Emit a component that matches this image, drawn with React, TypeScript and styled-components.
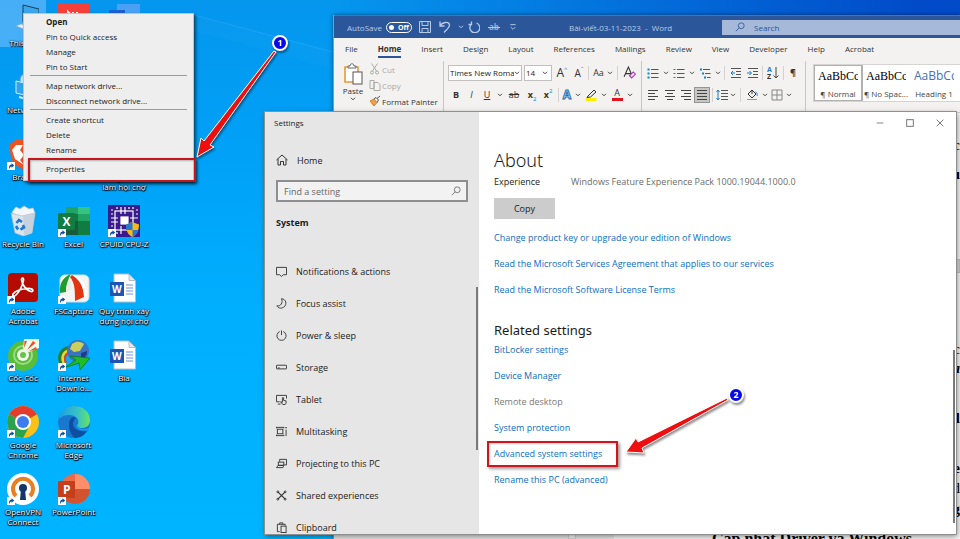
import React from "react";
import styled, { createGlobalStyle, css } from "styled-components";

const GlobalStyle = createGlobalStyle`
  *, *::before, *::after { box-sizing: border-box; }
  html, body, #root { height: 100%; }
  body { margin: 0; overflow: hidden; font-family: "Open Sans", "Noto Sans", sans-serif; font-size: 9px; color: #1b1b1b; }
  button, input, select { font: inherit; color: inherit; margin: 0; padding: 0; border: 0; background: none; }
  h1, h2, h3, p, ul { margin: 0; padding: 0; list-style: none; font-weight: 400; }
  a { text-decoration: none; color: inherit; }
  svg { display: block; flex: none; }
`;

const Desktop = styled.main`
  position: relative;
  height: 100vh;
  overflow: hidden;
  background:
    linear-gradient(to right, rgba(0, 70, 200, 0) 35%, rgba(0, 66, 196, 0.9) 96%),
    linear-gradient(to bottom, #0596ee 0%, #00a2f8 30%, #00b0ff 60%, #00b4ff 100%);
`;

const Streaks = styled.svg`
  position: absolute;
  inset: 0;
  width: 100%;
  height: 100%;
`;

/* ---------- Desktop shortcuts ---------- */

const ShortcutGrid = styled.div`
  position: relative;
  display: grid;
  width: max-content;
  grid-template-columns: 46px 55px 46px;
  grid-auto-rows: 67px;
  padding-top: 4px;
`;

const Shortcut = styled.button<{ $col: number; $row: number; $selected?: boolean }>`
  grid-column: ${(p) => p.$col};
  grid-row: ${(p) => p.$row};
  display: flex;
  flex-direction: column;
  align-items: center;
  align-self: start;
  gap: 2px;
  height: 56px;
  ${(p) => p.$selected && css`height: 43px; background: rgba(150, 205, 255, 0.45); box-shadow: 0 -4px 0 rgba(150, 205, 255, 0.45);`}
`;

const ShortcutLabel = styled.span`
  width: max-content;
  text-align: center;
  white-space: pre-line;
  font-size: 8px;
  line-height: 10px;
  color: #fff;
  text-shadow: 0 1px 1px #000, 1px 1px 1px #012, 0 0 2px #013, 0 0 1px #013;
`;

const ShortcutMark = () => (
  <g>
    <rect x="0" y="24" width="8" height="8" fill="#fff" />
    <path d="M2 30.5 C2 27.5 3.3 26.6 4.6 26.6 L4.6 25.2 L7.2 27.5 L4.6 29.8 L4.6 28.5 C3.5 28.6 3 29.2 2.8 30.5 Z" fill="#0b4fa8" />
  </g>
);

const Glyph = styled.text`
  font-family: "Open Sans", sans-serif;
  font-weight: 700;
`;

const wordDoc = (
  <>
    <path d="M6 2 H21 L27.500 8.500 V30 H6 Z" fill="#fff" stroke="#b5bdc8" />
    <path d="M21 2 V8.500 H27.500 Z" fill="#e3e7ec" stroke="#9da6b2" strokeWidth=".7" />
    <path d="M18 13 H25 M18 16 H25 M18 19 H25 M18 22 H25" stroke="#6794d6" strokeWidth="1" />
    <rect x="2" y="10" width="14" height="14" fill="#1d55b4" />
    <Glyph x="4" y="21" fontSize="10" fill="#fff">W</Glyph>
  </>
);

const art: Record<string, React.ReactNode> = {
  pc: (
    <>
      <path d="M16 1 L32 5 V23 L16 18 Z" fill="#3aa7ec" stroke="#24394f" />
      <path d="M9 22 L14 20 L31 26 L27 29 Z" fill="#e6eff7" stroke="#90a4b5" strokeWidth=".6" />
    </>
  ),
  net: (
    <>
      <circle cx="20" cy="9" r="7" fill="#bfe4fb" stroke="#4fa4da" />
      <path d="M9 10 L26 14 V26 L9 22 Z" fill="#2fa4f2" stroke="#d8ecf9" />
      <path d="M12 26 L27 30" stroke="#dbe8f2" strokeWidth="2" />
    </>
  ),
  brave: (
    <>
      <path d="M10 1 H24 L29 7 L27 20 C26 25 20 29 16 32 C11 28 5 25 4 19 L2 7 Z" fill="#f1531f" />
      <path d="M9 7 H16 L13 12 L17 17 L13 22 L17 27 L8 21 L5 12 Z" fill="#fff" />
    </>
  ),
  red: (
    <>
      <rect width="32" height="32" fill="#f5403a" />
      <path d="M10 15 V8 L15 13 V8 M19 13 V8" stroke="#fff" strokeWidth="2" fill="none" />
    </>
  ),
  blue: (
    <>
      <rect x="9" y="0" width="23" height="30" fill="#4aa0f5" />
      <rect x="1" y="6" width="16" height="16" fill="#1c5fd0" />
    </>
  ),
  bin: (
    <>
      <path d="M5 7 L9 2 L13 4 L17 1 L22 4 L26 3 L28 8 L25 12 H8 Z" fill="#f3f6fa" stroke="#bfcad6" strokeWidth=".7" />
      <path d="M4 8 L15 11 L28 8 L25 28 L16 31 L8 28 Z" fill="#dce4ec" stroke="#a9b8c6" strokeWidth=".7" />
      <path d="M16 11 L17 31 L25 28 L28 8 Z" fill="#c7d2dd" />
      <g stroke="#1f77cf" strokeWidth="2.600" fill="none">
        <path d="M9.500 18 L12 15 L15 17" />
        <path d="M9 21 L11 24.500" />
        <path d="M13.500 24.500 L17 22.500 L16 20" />
      </g>
    </>
  ),
  excel: (
    <>
      <rect x="8" y="2" width="12" height="14" fill="#21a366" />
      <rect x="20" y="2" width="12" height="7" fill="#33c481" />
      <rect x="20" y="9" width="12" height="7" fill="#21a366" />
      <rect x="8" y="16" width="12" height="14" fill="#185c37" />
      <rect x="20" y="16" width="12" height="14" fill="#107c41" />
      <rect x="8" y="9" width="12" height="7" fill="#107c41" />
      <rect x="0" y="8" width="17" height="17" rx="1" fill="#107c41" />
      <Glyph x="4.500" y="20.500" fontSize="12" fill="#fff">X</Glyph>
    </>
  ),
  cpuz: (
    <>
      <rect width="32" height="32" fill="#3a1a8c" />
      <g stroke="#fff" strokeWidth="1.200" fill="none">
        <rect x="7" y="6" width="18" height="19" />
        <rect x="13" y="12" width="7" height="7" fill="#fff" />
        <path d="M3 5 H5 M3 9 H5 M3 13 H10 M3 17 H10 M3 21 H5 M9 2 V4 M13 2 V9 M17 2 V9 M21 2 V4 M25 2 V4 M28 9 H30 M22 13 H30 M28 5 H30 M13 21 V29 M9 27 V29" />
      </g>
      <path d="M24 17 L31 19.500 C31 26 28 30 24.500 32 C20 30 18 26 18 19.500 Z" fill="#f7b916" />
      <path d="M24.500 17 L18 19.500 V25 H24.500 Z M24.500 25 H30.500 C29.500 28 27 31 24.500 32 Z" fill="#2878d2" />
    </>
  ),
  acrobat: (
    <>
      <rect x="1" y="1" width="30" height="29" rx="4" fill="#b30b00" />
      <path d="M6 22 C9 18 14 17 20 16.500 C27 16 27 20 24 19.500 C19 18.500 15 12 14.500 8 C14.500 5.500 17 5.500 16.500 8.500 C16 13 12 20 9 23 C7 25 5 24 6 22 Z" fill="none" stroke="#fff" strokeWidth="1.700" />
    </>
  ),
  fs: (
    <>
      <rect x="2" y="3" width="29" height="27" rx="5" fill="#f4f4f2" stroke="#d4dde2" />
      <path d="M13 2 C5 5 1 12 2 21 L8 20 C8 13 11 8 13 2 Z" fill="#1f9b2f" />
      <path d="M13 2 C9 9 8 15 8 20 L13 18 C13 12 14 8 13 2 Z" fill="#e9efe6" />
      <path d="M14 3 C21 6 26 14 26 25 L17 29 C17 19 17 11 12 5 Z" fill="#e2350f" />
      <path d="M14 3 C23 4 29 13 29 23 L26 25 C26 15 21 7 14 3 Z" fill="#fff" />
    </>
  ),
  word: wordDoc,
  coccoc: (
    <>
      <circle cx="16" cy="17" r="15" fill="#58bd3b" />
      <circle cx="16" cy="16" r="9" fill="none" stroke="#9bdc84" strokeWidth="2" />
      <circle cx="16" cy="16" r="6" fill="#f3fbef" />
      <circle cx="16" cy="16" r="3" fill="#69c44b" />
      <path d="M16 11 L17 0 H32 V9 L22 13 Z" fill="#eefae8" />
      <path d="M17 9 L17.500 2 H20 Z M20 11 L26 2 L28.500 4 Z M22 12 L29 8 L30 10.500 Z" fill="#ef4b2b" />
    </>
  ),
  idm: (
    <>
      <path d="M4 27 C-2 16 4 8 15 8" fill="none" stroke="#2c7d1f" strokeWidth="3" />
      <path d="M6 25 C2 16 7 11 15 11" fill="none" stroke="#f2d51d" strokeWidth="2.500" />
      <path d="M8 24 C5 17 9 13 15 13" fill="none" stroke="#e3401d" strokeWidth="2" />
      <circle cx="20" cy="12" r="11" fill="#3a72c4" />
      <path d="M14 5 C19 1 24 3 26 5 L22 12 L16 13 L12 10 Z" fill="#c9cf5c" />
      <path d="M23 14 L29 12 C29 17 26 20 23 21 Z" fill="#1a3e8a" />
      <path d="M12 17 L32 19 L22 31 L21 24 L6 29 L18 21 Z" fill="#20bb28" stroke="#0c7a18" strokeWidth=".8" />
    </>
  ),
  chrome: (
    <>
      <circle cx="16" cy="16" r="16" fill="#fbc116" />
      <path d="M16 16 L2.200 8 A16 16 0 0 1 29.800 8 Z" fill="#e33b2e" />
      <path d="M16 16 L2.200 8 A16 16 0 0 0 16 32 L22.500 20 Z" fill="#2ba24c" />
      <path d="M16 8 H29.800 L20 14 Z" fill="#e33b2e" />
      <circle cx="16" cy="16" r="8" fill="#fff" />
      <circle cx="16" cy="16" r="6" fill="#3b7ded" />
    </>
  ),
  edge: (
    <>
      <defs>
        <linearGradient id="edgeTop" x1="0" x2="1">
          <stop offset="0" stopColor="#1b9de2" />
          <stop offset=".6" stopColor="#35c1c9" />
          <stop offset="1" stopColor="#6be35f" />
        </linearGradient>
      </defs>
      <circle cx="16" cy="16" r="16" fill="#1878cf" />
      <path d="M0 15 C1 5 8 0 16 0 C25 0 32 6 32 14 C32 20 28 22 24 22 C20 22 18.500 20 20 18 C22 12 16 9 11 9 C5 9 1 12 0 15 Z" fill="url(#edgeTop)" />
      <path d="M11 19 C11 12 15 10 18 12 C11 18 17 27 29 25 C26 30 21 32 17 32 C13 29 11 24 11 19 Z" fill="#0d4f9e" />
      <path d="M19 18 C17 21 20 25 29 24.500 L31 22 C26 24 19 23 19 18 Z" fill="#06a4f5" />
    </>
  ),
  vpn: (
    <>
      <circle cx="16" cy="16" r="16" fill="#fff" />
      <path d="M9 23 A10 10 0 1 1 23 23" fill="none" stroke="#e87f22" strokeWidth="4" />
      <circle cx="16" cy="15" r="4" fill="#153668" />
      <path d="M14 16 H18 L19 27 H13 Z" fill="#153668" />
    </>
  ),
  ppt: (
    <>
      <circle cx="17" cy="16" r="15" fill="#ed6c47" />
      <path d="M17 1 A15 15 0 0 1 32 16 H17 Z" fill="#ff8f6b" />
      <path d="M2 16 H32 A15 15 0 0 1 2 16 Z" fill="#d35230" />
      <rect x="0" y="8" width="17" height="17" rx="1" fill="#c43e1c" />
      <Glyph x="5" y="20.500" fontSize="12" fill="#fff">P</Glyph>
    </>
  ),
};

type ShortcutData = { id: string; col: number; row: number; label: string; link?: boolean };
const shortcuts: ShortcutData[] = [
  { id: "pc", col: 1, row: 1, label: "This PC" },
  { id: "red", col: 2, row: 1, label: "" },
  { id: "blue", col: 3, row: 1, label: "" },
  { id: "net", col: 1, row: 2, label: "Network" },
  { id: "brave", col: 1, row: 3, label: "Brave", link: true },
  { id: "word", col: 3, row: 3, label: "Quy trình\nlàm hội chợ" },
  { id: "bin", col: 1, row: 4, label: "Recycle Bin" },
  { id: "excel", col: 2, row: 4, label: "Excel", link: true },
  { id: "cpuz", col: 3, row: 4, label: "CPUID CPU-Z", link: true },
  { id: "acrobat", col: 1, row: 5, label: "Adobe\nAcrobat", link: true },
  { id: "fs", col: 2, row: 5, label: "FSCapture", link: true },
  { id: "word", col: 3, row: 5, label: "Quy trình xây\ndựng hội chợ" },
  { id: "coccoc", col: 1, row: 6, label: "Cốc Cốc", link: true },
  { id: "idm", col: 2, row: 6, label: "Internet\nDownlo...", link: true },
  { id: "word", col: 3, row: 6, label: "Bìa" },
  { id: "chrome", col: 1, row: 7, label: "Google\nChrome", link: true },
  { id: "edge", col: 2, row: 7, label: "Microsoft\nEdge", link: true },
  { id: "vpn", col: 1, row: 8, label: "OpenVPN\nConnect", link: true },
  { id: "ppt", col: 2, row: 8, label: "PowerPoint", link: true },
];

/* ---------- Context menu ---------- */

const Menu = styled.div`
  position: absolute;
  left: 23px;
  top: 13px;
  width: 171px;
  padding: 0 0 3px;
  background: #eee;
  border: 1px solid #c3c3c3;
  box-shadow: 2px 2px 3px rgba(0, 0, 0, 0.55);
`;

const MenuItem = styled.button<{ $strong?: boolean }>`
  display: block;
  width: 100%;
  padding-left: 22px;
  text-align: left;
  font-size: 8px;
  line-height: 15px;
  font-weight: ${(p) => (p.$strong ? 700 : 400)};
`;

const MenuRule = styled.hr`
  margin: 1px 6px 2px;
  border: 0;
  border-top: 1px solid #9b9b9b;
`;

const MarkedItem = styled.div`
  margin: 1px -3px -5px 4px;
  padding: 1px 0 4px;
  border: 2px solid #c4161c;
  box-shadow: 1px 2px 3px rgba(0, 0, 0, 0.6), inset 1px 1px 2px rgba(0, 0, 0, 0.25);

  ${MenuItem} { padding-left: 16px; }
`;

/* ---------- Word ---------- */

const WordWindow = styled.section`
  position: absolute;
  left: 333px;
  right: 0;
  top: 15px;
  bottom: 0;
  overflow: hidden;
  display: flex;
  flex-direction: column;
  background: #e6e6e6;
  border-left: 1px solid #8c98a8;
  box-shadow: 0 0 4px rgba(0, 0, 0, 0.5);
`;

const WordTitle = styled.header`
  display: flex;
  align-items: center;
  height: 23px;
  flex: none;
  padding-left: 13px;
  background: #2b579a;
  border-top: 1px solid #56728f;
  color: #b9cbe6;
  font-size: 8px;
  white-space: nowrap;
`;

const AutoSave = styled.label`
  display: flex;
  align-items: center;
  gap: 4px;
  width: 65px;
`;

const Switch = styled.span`
  display: flex;
  align-items: center;
  gap: 4px;
  width: 26px;
  height: 11px;
  padding-left: 2px;
  border: 1px solid #fff;
  border-radius: 6px;
  color: #fff;
  font-size: 7px;
  font-weight: 700;
`;

const SwitchInput = styled.input`
  appearance: none;
  width: 5px;
  height: 5px;
  border-radius: 50%;
  background: #fff;
`;

const QuickAccess = styled.div`
  display: flex;
  align-items: center;
  width: 157px;
  padding-left: 6px;
`;

const WordName = styled.h2`
  width: 153px;
  font-size: 8px;
`;

const WordSearch = styled.label`
  flex: 1;
  display: flex;
  align-items: center;
  gap: 9px;
  height: 15px;
  padding-left: 13px;
  background: #a6b9d8;
  color: #2b579a;

  input { width: 100px; outline: 0; }
  input::placeholder { color: #2b579a; opacity: 1; }
`;

const Tabs = styled.nav`
  display: flex;
  flex: none;
  height: 23px;
  padding: 2px 0 0 11px;
  gap: 20px;
  background: #f3f2f1;
`;

const Tab = styled.button<{ $on?: boolean }>`
  height: 18px;
  font-size: 8px;
  color: #333;
  font-weight: ${(p) => (p.$on ? 700 : 400)};
  border-bottom: 2px solid ${(p) => (p.$on ? "#2b579a" : "transparent")};
`;

const Ribbon = styled.div`
  display: flex;
  flex: none;
  height: 52px;
  background: #f3f2f1;
  border-bottom: 1px solid #d0cecc;
`;

const Group = styled.div<{ $w: number; $pad?: number }>`
  display: flex;
  flex-direction: column;
  flex: none;
  width: ${(p) => p.$w}px;
  padding-left: ${(p) => p.$pad ?? 4}px;
  gap: 4px;
  border-right: 1px solid #c8c6c4;
`;

const ClipboardGroup = styled.div`
  display: flex;
  flex: none;
  width: 110px;
  padding: 0 0 0 8px;
  gap: 5px;
  border-right: 1px solid #c8c6c4;
`;

const PasteButton = styled.button`
  display: flex;
  flex-direction: column;
  align-items: center;
  align-self: start;
  width: 22px;
  padding-top: 2px;
  font-size: 8px;
  line-height: 12px;
  color: #333;
`;

const ClipList = styled.div`
  display: flex;
  flex-direction: column;
`;

const ClipButton = styled.button`
  display: flex;
  align-items: center;
  gap: 1px;
  height: 16px;
  font-size: 8px;
  color: #333;
  white-space: nowrap;
  &:disabled { color: #a8a6a4; }
`;

const ToolRow = styled.div`
  display: flex;
  align-items: center;
  height: 19px;
  &:first-child { margin-top: 3px; height: 17px; }
`;

const Tool = styled.button<{ $w: number; $on?: boolean }>`
  display: flex;
  align-items: center;
  justify-content: center;
  flex: none;
  width: ${(p) => p.$w}px;
  height: 16px;
  gap: 3px;
  font-size: 9px;
  color: #333;
  ${(p) => p.$on && css`background: #c8c6c4; outline: 1px solid #979593; outline-offset: -1px;`}
`;

const Split = styled.i<{ $w: number }>`
  flex: none;
  width: ${(p) => p.$w}px;
  height: 14px;
  background: linear-gradient(#d4d2d0, #d4d2d0) center / 1px 100% no-repeat;
`;

const Picker = styled.label<{ $w: number }>`
  display: flex;
  align-items: center;
  flex: none;
  width: ${(p) => p.$w}px;
  height: 16px;
  margin-right: 2px;
  padding: 0 1px 0 1px;
  background: #fff;
  border: 1px solid #c2c0be;
  font-size: 8px;

  &:last-of-type { margin-right: 0; padding-right: 3px; }
  select { appearance: none; flex: 1; min-width: 0; outline: 0; }
`;

const Styles = styled.div`
  display: flex;
  flex: 1;
  min-width: 0;
  overflow: hidden;
  align-self: flex-start;
  height: 38px;
  margin: 3px 0 0 7px;
  background: #fff;
  border: 1px solid #d6d4d2;
  border-right: 0;
`;

const StyleCard = styled.button<{ $on?: boolean }>`
  display: flex;
  flex-direction: column;
  align-items: center;
  justify-content: space-between;
  flex: none;
  width: 48px;
  height: 36px;
  padding: 3px 3px 2px;
  font-size: 8px;
  line-height: 11px;
  color: #444;
  white-space: nowrap;
  ${(p) => p.$on && css`outline: 2px solid #b3b1af; outline-offset: -1px;`}
`;

const Sample = styled.span<{ $heading?: boolean }>`
  width: 40px;
  overflow: hidden;
  text-align: left;
  font: ${(p) => (p.$heading ? '12px/16px "Open Sans", sans-serif' : '12px/16px "Liberation Serif", serif')};
  color: ${(p) => (p.$heading ? "#4472a8" : "#000")};
`;

const Document = styled.div`
  flex: 1;
  display: flex;
  min-height: 0;
  background: #e6e6e6;
`;

const VerticalRuler = styled.div`
  width: 8px;
  margin-left: 234px;
  background: #fafafa;
  border: 1px solid #cfcfcf;
`;

const Page = styled.article`
  flex: 1;
  display: flex;
  flex-direction: column;
  justify-content: space-between;
  margin-left: 38px;
  overflow: hidden;
  background: #f6f6f6;
  font-family: "Liberation Serif", serif;
  font-size: 15px;
  color: #000;
`;

const PageEdge = styled.div`
  display: grid;
  grid-template-rows: 30px 29px 89px 86px 19px 50px 50px 20px 21px;
  align-items: end;
  justify-items: end;
  padding-top: 12px;
  line-height: 20px;
  b, i { display: block; }
  i { font-weight: 700; }
`;

const PageBreak = styled.span`
  width: 100%;
  height: 14px;
  background: #d9d9d9;
  border: 1px solid #c3c3c3;
`;

const PageHeading = styled.h3`
  padding-left: 98px;
  margin-bottom: -9px;
  font-size: 16px;
  line-height: 18px;
  font-weight: 700;
  white-space: nowrap;
`;

/* ---------- Settings ---------- */

const SettingsWindow = styled.section`
  position: absolute;
  left: 265px;
  right: 4px;
  top: 112px;
  bottom: 5px;
  display: flex;
  overflow: hidden;
  background: #fff;
  outline: 1px solid #8f8f8f;
  box-shadow: 1px 2px 6px rgba(0, 0, 0, 0.5);
`;

const Side = styled.aside`
  display: flex;
  flex-direction: column;
  flex: none;
  width: 214px;
  padding: 3px 0 0 11px;
  background: #e6e6e6;
`;

const SideTitle = styled.h2`
  margin-left: -2px;
  font-size: 8px;
  line-height: 16px;
`;

const SideItem = styled.button`
  display: flex;
  align-items: center;
  flex: none;
  height: 32px;
  gap: 9px;
  font-size: 9px;
  text-align: left;
`;

const HomeLink = styled(SideItem)`
  margin-top: 13px;
`;

const FindBox = styled.label`
  display: flex;
  align-items: center;
  flex: none;
  height: 22px;
  width: 192px;
  margin-top: 4px;
  padding: 0 5px 0 6px;
  background: #f2f2f2;
  border: 2px solid #8e8e8e;

  input { flex: 1; min-width: 0; outline: 0; }
  input::placeholder { color: #666; opacity: 1; }
`;

const SideHeading = styled.h3`
  margin: 12px 0 23px;
  font-size: 9px;
  line-height: 18px;
  font-weight: 700;
`;

const SideScroll = styled.div`
  display: flex;
  min-height: 0;
  justify-content: space-between;
`;

const Thumb = styled.i<{ $top: number; $h: number }>`
  flex: none;
  width: 2px;
  height: ${(p) => p.$h}px;
  margin: ${(p) => p.$top}px 1px 0 0;
  background: #7a7a7a;
`;

const NavList = styled.nav`
  display: flex;
  flex-direction: column;
`;

const Main = styled.div`
  display: flex;
  flex: 1;
  flex-direction: column;
  min-width: 0;
`;

const Caption = styled.div`
  display: flex;
  justify-content: flex-end;
  padding-right: 1px;
`;

const CaptionButton = styled.button`
  display: grid;
  place-items: center;
  width: 30px;
  height: 22px;
`;

const Body = styled.div`
  display: flex;
  flex: 1;
  min-height: 0;
  justify-content: space-between;
  padding-left: 15px;
`;

const Column = styled.div`
  display: flex;
  flex-direction: column;
  align-items: flex-start;
`;

const PageTitle = styled.h1`
  padding-top: 14px;
  font-size: 18px;
  line-height: 24px;
  font-family: "Noto Sans", "Open Sans", sans-serif;
  font-weight: 300;
`;

const SpecRow = styled.dl`
  display: flex;
  margin: 3px 0 9px;
  line-height: 14px;
  dt { width: 77px; }
  dd { margin: 0; color: #6b6b6b; }
`;

const CopyButton = styled.button`
  width: 61px;
  height: 21px;
  margin-bottom: 6px;
  background: #ccc;
`;

const TextLink = styled.a<{ $muted?: boolean }>`
  line-height: 26px;
  color: ${(p) => (p.$muted ? "#777" : "#0a6fc6")};
`;

const SectionTitle = styled.h2`
  margin-top: 17px;
  font-size: 13px;
  line-height: 20px;
  font-family: "Noto Sans", "Open Sans", sans-serif;
`;

const RelatedLinks = styled.div`
  display: flex;
  flex-direction: column;
  align-items: flex-start;
  margin-top: -3px;
`;

const MarkedLink = styled.div`
  width: 131px;
  height: 26px;
  margin-left: -7px;
  padding-left: 5px;
  border: 2px solid #d0151c;
  box-shadow: 2px 2px 3px rgba(0, 0, 0, 0.4), inset 1px 1px 2px rgba(0, 0, 0, 0.2);
  ${TextLink} { display: block; line-height: 21px; }
`;

/* ---------- Callouts ---------- */

const Callouts = styled.svg`
  position: absolute;
  left: 0;
  top: 0;
  pointer-events: none;
  filter: drop-shadow(1px 2px 1px rgba(0, 0, 0, 0.45));
`;

const Chevron = ({ light }: { light?: boolean }) => (
  <svg width="6" height="4" viewBox="0 0 6 4">
    <path d="M1 .8 L3 2.800 L5 .8" fill="none" stroke={light ? "#b9cbe6" : "#444"} strokeWidth="1" />
  </svg>
);

const Line = ({ s = 12, c = "#333", children }: { s?: number; c?: string; children: React.ReactNode }) => (
  <svg width={s} height={s} viewBox="0 0 12 12" fill="none" stroke={c} strokeWidth="1">
    {children}
  </svg>
);

const Magnifier = ({ c }: { c: string }) => (
  <Line s={10} c={c}>
    <circle cx="7.500" cy="4.500" r="3.500" />
    <path d="M5 7 L1 11" />
  </Line>
);

const navItems: { label: string; icon: React.ReactNode }[] = [
  { label: "Notifications & actions", icon: <path d="M.5 1.500 H11.500 V9.500 H8 L6 11.500 L4 9.500 H.5 Z" /> },
  { label: "Focus assist", icon: <path d="M6 .8 C11 1 12.500 7 8.500 10 C5.500 12 2 11 1 8.500 C5 9.500 8 5 6 .8 Z" /> },
  { label: "Power & sleep", icon: <path d="M6 .5 V5.500 M4 1.700 A5 5 0 1 0 8 1.700" /> },
  { label: "Storage", icon: <><rect x=".5" y="3.500" width="11" height="4" rx=".5" /><path d="M2 6.500 H4" /></> },
  { label: "Tablet", icon: <><path d="M4 8.500 H.5 V1.500 H11.500 V5 M2 11 H5" /><path d="M7 9 V4.500 C7 3.500 8.300 3.500 8.300 4.500 V7 L11 7.500 V10 L10 11.500 H7.500 L5 8.500 Z" /></> },
  { label: "Multitasking", icon: <><rect x="1.500" y="3.500" width="6" height="5" /><path d="M.5 1 V2.500 M8.500 1 V2.500 M.5 1.500 H8.500 M.5 11 V9.500 M8.500 11 V9.500 M.5 10.500 H8.500 M11 4 V11" /><path d="M11 1 V2.500" strokeWidth="1.500" /></> },
  { label: "Projecting to this PC", icon: <><path d="M4 4 V1.500 H11.500 V7.500 H9" /><rect x="2.500" y="4.500" width="6" height="3.500" /><path d="M.5 10.500 L2.500 8 H8.500 L7.500 10.500 Z" /></> },
  { label: "Shared experiences", icon: <><path d="M2 2 L10 10 M10 2 L2 10" strokeWidth="1.300" /><circle cx="2" cy="2" r="1" /><circle cx="10" cy="2" r="1" /><circle cx="2" cy="10" r="1" /><circle cx="10" cy="10" r="1" /></> },
  { label: "Clipboard", icon: <><path d="M4 10.500 H1.500 V2.500 H10 V4" /><path d="M4 2.500 V1 H7.500 V2.500" /><rect x="5.500" y="4.500" width="5.500" height="7" /></> },
];

const List = ({ kind }: { kind: "dot" | "num" | "tree" }) => (
  <Line s={12}>
    <path d={kind === "tree" ? "M4 2.500 H11 M6 6.500 H11.500 M8 10.500 H11.500" : "M4 2.500 H11.500 M4 6.500 H11.500 M4 10.500 H11.500"} stroke="#555" />
    <path d={kind === "tree" ? "M1 2.500 H3 M3 6.500 H5 M5 10.500 H7" : "M.5 2.500 H2.500 M.5 6.500 H2.500 M.5 10.500 H2.500"} stroke="#1a7cc9" strokeWidth={kind === "num" ? 1.2 : 2} />
  </Line>
);

const Align = ({ d }: { d: string }) => (
  <Line s={12}><path d={d} stroke="#444" /></Line>
);

const Indent = ({ out }: { out?: boolean }) => (
  <Line s={12}>
    <path d="M1 1.500 H11 M6 4.500 H11 M6 7.500 H11 M1 10.500 H11" stroke="#555" />
    <path d={out ? "M5 6 H1 M3 4 L1 6 L3 8" : "M0 6 H4 M2.500 4 L4.500 6 L2.500 8"} stroke="#1a7cc9" />
  </Line>
);

const Under = styled.span<{ $c: string }>`
  width: 11px;
  line-height: 10px;
  text-align: center;
  border-bottom: 3px solid ${(p) => p.$c};
`;

const BlueEffect = styled.span`
  font-size: 12px;
  font-weight: 700;
  line-height: 16px;
  color: #d6eafa;
  -webkit-text-stroke: 1px #1a6fb5;
`;

const Small = styled.sup<{ $low?: boolean }>`
  align-self: ${(p) => (p.$low ? "flex-end" : "flex-start")};
  margin-left: -3px;
  font-size: 6px;
  line-height: 8px;
  color: #1a7cc9;
`;

const Letter = styled.span<{ $size: number }>`
  font-size: ${(p) => p.$size}px;
`;

function WordApp() {
  return (
    <WordWindow aria-label="Word">
      <WordTitle>
        <AutoSave>
          AutoSave
          <Switch><SwitchInput type="checkbox" />Off</Switch>
        </AutoSave>
        <QuickAccess>
          <Tool $w={14} aria-label="Save"><Line c="#b9cbe6"><path d="M.5 .5 H11.500 V11.500 H.5 Z M3 .5 V4.500 H9 V.5 M3 11.500 V7.500 H9 V11.500" /></Line></Tool>
          <Tool $w={26} aria-label="Undo"><Line c="#b9cbe6"><path d="M1 .5 V5 H5.500 M1 5 C3 1 10 0 10.500 4 C10.500 7 7 9 5 11.500" strokeWidth="1.300" /></Line></Tool>
          <Chevron light />
          <Tool $w={20} aria-label="Repeat"><Line c="#b9cbe6"><path d="M3.500 .5 V3.500 H.5 M3.500 3 A5 5 0 1 0 8.500 2" strokeWidth="1.300" /></Line></Tool>
          <Tool $w={20} aria-label="Strikethrough"><svg width="12" height="12" viewBox="0 0 12 12"><Glyph x="1" y="9" fontSize="8" fill="#93abd2">ab</Glyph><path d="M0 6.500 H12" stroke="#b9cbe6" /></svg></Tool>
          <Tool $w={18} aria-label="Customize"><Line s={8} c="#b9cbe6"><path d="M2 2.500 H10 M2.500 6 L6 9.500 L9.500 6" strokeWidth="1.400" /></Line></Tool>
        </QuickAccess>
        <WordName>Bài-viết-03-11-2023&nbsp; - &nbsp;Word</WordName>
        <WordSearch><Magnifier c="#2b579a" /><input placeholder="Search" aria-label="Search" /></WordSearch>
      </WordTitle>
      <Tabs>
        {["File", "Home", "Insert", "Design", "Layout", "References", "Mailings", "Review", "View", "Developer", "Help", "Acrobat"].map((t) => (
          <Tab key={t} $on={t === "Home"}>{t}</Tab>
        ))}
      </Tabs>
      <Ribbon>
        <ClipboardGroup>
          <PasteButton>
            <svg width="20" height="22" viewBox="0 0 20 22">
              <path d="M2 4 H15 V19 H2 Z" fill="#fff" stroke="#e39a3b" strokeWidth="1.600" />
              <path d="M5 5 V3 H7 C7 0 11 0 11 3 H13 V5 Z" fill="#fff" stroke="#666" />
              <rect x="10" y="9" width="9" height="12" fill="#fff" stroke="#555" />
            </svg>
            Paste
            <Chevron />
          </PasteButton>
          <ClipList>
            <ClipButton disabled><Line c="#aaa"><path d="M2.500 .5 L7.500 8 M8.500 .5 L3.500 8" /><circle cx="3" cy="9.500" r="1.500" /><circle cx="8" cy="9.500" r="1.500" /></Line>Cut</ClipButton>
            <ClipButton disabled><Line c="#aaa"><path d="M1 1.500 H5 V9.500 H1 Z M5 3.500 H9 L11 5.500 V11.500 H5 Z" fill="#f3f2f1" /></Line>Copy</ClipButton>
            <ClipButton><Line c="#555"><path d="M1 6 L5 4 L8 7.500 L5 11 Z" fill="#f0a04b" stroke="#e07f1a" /><path d="M5 4 L7 2.500 L9.500 5 L8 7.500 M8 3.500 L11 1" /></Line>Format Painter</ClipButton>
          </ClipList>
        </ClipboardGroup>
        <Group $w={198}>
          <ToolRow>
            <Picker $w={74}><select aria-label="Font"><option>Times New Roma</option></select><Chevron /></Picker>
            <Picker $w={28}><select aria-label="Font size"><option>14</option></select><Chevron /></Picker>
            <Tool $w={20}><Letter $size={12}>A</Letter><Small>^</Small></Tool>
            <Tool $w={14}><Letter $size={10}>A</Letter><Small>ˇ</Small></Tool>
            <Split $w={4} />
            <Tool $w={26}>Aa<Chevron /></Tool>
            <Split $w={2} />
            <Tool $w={22} aria-label="Clear formatting">
              <Line s={13}><path d="M1 10 L5 1 L8 8 M2.500 7 H7" /><path d="M6 9 L9.500 5.500 L11.500 7.500 L8 11 Z" stroke="#a33bb5" fill="#f5e4f8" /></Line>
            </Tool>
          </ToolRow>
          <ToolRow>
            <Tool $w={16}><b>B</b></Tool>
            <Tool $w={15}><em>I</em></Tool>
            <Tool $w={16}><u>U</u></Tool>
            <Tool $w={9} aria-label="Underline style"><Chevron /></Tool>
            <Tool $w={20}><s>ab</s></Tool>
            <Tool $w={16}><b>x</b><Small $low>2</Small></Tool>
            <Tool $w={16}><b>x</b><Small>2</Small></Tool>
            <Split $w={4} />
            <Tool $w={14}><BlueEffect>A</BlueEffect></Tool>
            <Tool $w={8} aria-label="Text effects"><Chevron /></Tool>
            <Tool $w={18} aria-label="Highlight">
              <Line><path d="M3 7 L9 1 L11 3 L5.500 8 L2 8.500 Z" /><path d="M.5 10.500 H11.500" stroke="#ffee00" strokeWidth="3" /></Line>
            </Tool>
            <Tool $w={8} aria-label="Highlight colours"><Chevron /></Tool>
            <Tool $w={18}><Under $c="#e3131b">A</Under></Tool>
            <Tool $w={8} aria-label="Font colours"><Chevron /></Tool>
          </ToolRow>
        </Group>
        <Group $w={164} $pad={2}>
          <ToolRow>
            <Tool $w={18} aria-label="Bullets"><List kind="dot" /></Tool>
            <Tool $w={8} aria-label="Bullet styles"><Chevron /></Tool>
            <Tool $w={18} aria-label="Numbering"><List kind="num" /></Tool>
            <Tool $w={8} aria-label="Number styles"><Chevron /></Tool>
            <Tool $w={18} aria-label="Multilevel list"><List kind="tree" /></Tool>
            <Tool $w={8} aria-label="Multilevel styles"><Chevron /></Tool>
            <Split $w={4} />
            <Tool $w={20} aria-label="Decrease indent"><Indent out /></Tool>
            <Tool $w={14} aria-label="Increase indent"><Indent /></Tool>
            <Split $w={4} />
            <Tool $w={17} aria-label="Sort">
              <svg width="12" height="14" viewBox="0 0 12 14">
                <Glyph x="0" y="6" fontSize="7" fill="#1a7cc9">A</Glyph>
                <Glyph x="0" y="13" fontSize="7" fill="#333">Z</Glyph>
                <path d="M9 1 V12 M6.500 9.500 L9 12 L11.500 9.500" stroke="#444" fill="none" />
              </svg>
            </Tool>
            <Split $w={4} />
            <Tool $w={16}><b>¶</b></Tool>
          </ToolRow>
          <ToolRow>
            <Tool $w={18} aria-label="Align left"><Align d="M1 1.500 H11 M1 4.500 H8 M1 7.500 H11 M1 10.500 H8" /></Tool>
            <Tool $w={16} aria-label="Center"><Align d="M1 1.500 H11 M3 4.500 H9 M1 7.500 H11 M3 10.500 H9" /></Tool>
            <Tool $w={16} aria-label="Align right"><Align d="M1 1.500 H11 M4 4.500 H11 M1 7.500 H11 M4 10.500 H11" /></Tool>
            <Tool $w={16} $on aria-label="Justify"><Align d="M1 1.500 H11 M1 4.500 H11 M1 7.500 H11 M1 10.500 H11" /></Tool>
            <Split $w={5} />
            <Tool $w={14} aria-label="Line spacing">
              <Line><path d="M5 1.500 H12 M5 4.500 H12 M5 7.500 H12 M5 10.500 H12" stroke="#555" /><path d="M2 1 V11 M.5 3 L2 1 L3.500 3 M.5 9 L2 11 L3.500 9" stroke="#1a7cc9" /></Line>
            </Tool>
            <Tool $w={8} aria-label="Spacing options"><Chevron /></Tool>
            <Split $w={6} />
            <Tool $w={18} aria-label="Shading">
              <Line><path d="M2 5 L6 1 L10 5 L6 9 Z M6 1 V5" /><path d="M9.500 3 C12 4 11 6 11 7" stroke="#1a7cc9" /><path d="M1 10.500 H11" stroke="#999" /></Line>
            </Tool>
            <Tool $w={8} aria-label="Shading colours"><Chevron /></Tool>
            <Tool $w={16} aria-label="Borders">
              <Line c="#888"><path d="M1 1 H11 V11 H1 Z M6 1 V11 M1 6 H11" /></Line>
            </Tool>
            <Tool $w={8} aria-label="Border styles"><Chevron /></Tool>
          </ToolRow>
        </Group>
        <Styles>
          <StyleCard $on><Sample>AaBbCc</Sample>¶ Normal</StyleCard>
          <StyleCard><Sample>AaBbCc</Sample>¶ No Spac...</StyleCard>
          <StyleCard><Sample $heading>AaBbCc</Sample>Heading 1</StyleCard>
        </Styles>
      </Ribbon>
      <Document>
        <VerticalRuler />
        <Page>
          <PageEdge>
            <span>c</span><b>u</b><PageBreak />
            <span>c</span><i>a</i><b>l</b><b>e</b><span>d</span><b>g</b>
          </PageEdge>
          <PageHeading>Cập nhật Driver và Windows</PageHeading>
        </Page>
      </Document>
    </WordWindow>
  );
}

function SettingsApp() {
  return (
    <SettingsWindow aria-label="Settings">
      <Side>
        <SideTitle>Settings</SideTitle>
        <HomeLink><Line><path d="M.5 6 L6 1 L11.500 6 M2 5 V11 H4.500 V7.500 H7.500 V11 H10 V5" /></Line>Home</HomeLink>
        <FindBox><input placeholder="Find a setting" aria-label="Find a setting" /><Magnifier c="#666" /></FindBox>
        <SideHeading>System</SideHeading>
        <SideScroll>
          <NavList>
            {navItems.map((n) => (
              <SideItem key={n.label}><Line s={11}>{n.icon}</Line>{n.label}</SideItem>
            ))}
          </NavList>
          <Thumb $top={32} $h={163} />
        </SideScroll>
      </Side>
      <Main>
        <Caption>
          <CaptionButton aria-label="Minimize"><Line s={8} c="#888"><path d="M1 6 H11" strokeWidth="1.500" /></Line></CaptionButton>
          <CaptionButton aria-label="Maximize"><Line s={8} c="#777"><rect x="1" y="1" width="10" height="10" strokeWidth="1.500" /></Line></CaptionButton>
          <CaptionButton aria-label="Close"><Line s={8} c="#777"><path d="M1 1 L11 11 M11 1 L1 11" strokeWidth="1.500" /></Line></CaptionButton>
        </Caption>
        <Body>
          <Column>
            <PageTitle>About</PageTitle>
            <SpecRow><dt>Experience</dt><dd>Windows Feature Experience Pack 1000.19044.1000.0</dd></SpecRow>
            <CopyButton>Copy</CopyButton>
            <TextLink href="#key">Change product key or upgrade your edition of Windows</TextLink>
            <TextLink href="#services">Read the Microsoft Services Agreement that applies to our services</TextLink>
            <TextLink href="#license">Read the Microsoft Software License Terms</TextLink>
            <SectionTitle>Related settings</SectionTitle>
            <RelatedLinks>
              <TextLink href="#bitlocker">BitLocker settings</TextLink>
              <TextLink href="#devices">Device Manager</TextLink>
              <TextLink href="#remote" $muted>Remote desktop</TextLink>
              <TextLink href="#protection">System protection</TextLink>
              <MarkedLink><TextLink href="#advanced">Advanced system settings</TextLink></MarkedLink>
              <TextLink href="#rename">Rename this PC (advanced)</TextLink>
            </RelatedLinks>
          </Column>
          <Thumb $top={216} $h={173} />
        </Body>
      </Main>
    </SettingsWindow>
  );
}

export default function App() {
  return (
    <>
      <GlobalStyle />
      <Desktop>
        <Streaks viewBox="0 0 960 539" preserveAspectRatio="none" aria-hidden="true">
          <path d="M190 14 L340 52 V70 L190 30 Z" fill="#fff" opacity=".02" />
          <path d="M190 14 L340 54" stroke="#6cc7ff" opacity=".2" />
        </Streaks>
        <ShortcutGrid>
          {shortcuts.map((s) => (
            <Shortcut key={`${s.col}-${s.row}`} $col={s.col} $row={s.row} $selected={s.id === "pc"} aria-label={s.label || s.id}>
              <svg width="32" height="32" viewBox="0 0 32 32">
                {art[s.id]}
                {s.link && <ShortcutMark />}
              </svg>
              <ShortcutLabel>{s.label}</ShortcutLabel>
            </Shortcut>
          ))}
        </ShortcutGrid>
        <WordApp />
        <SettingsApp />
        <Menu role="menu">
          <MenuItem $strong>Open</MenuItem>
          <MenuItem>Pin to Quick access</MenuItem>
          <MenuItem>Manage</MenuItem>
          <MenuItem>Pin to Start</MenuItem>
          <MenuRule />
          <MenuItem>Map network drive...</MenuItem>
          <MenuItem>Disconnect network drive...</MenuItem>
          <MenuRule />
          <MenuItem>Create shortcut</MenuItem>
          <MenuItem>Delete</MenuItem>
          <MenuItem>Rename</MenuItem>
          <MarkedItem><MenuItem>Properties</MenuItem></MarkedItem>
        </Menu>
        <Callouts width="960" height="539" viewBox="0 0 960 539">
          <g fill="#ee1010" stroke="#fff" strokeWidth="1" strokeLinejoin="round">
            <path d="M274 51 L276 52 L210 145 L214 147 L197 157 L201 138 L204 141 Z" />
            <path d="M727 398 L728 400 L642 448 L644 453 L626 452 L636 438 L638 442 Z" />
          </g>
          <g fill="#0808e8" stroke="#fff" strokeWidth="2">
            <circle cx="280" cy="43" r="7" />
            <circle cx="736" cy="395" r="7" />
          </g>
          <Glyph x="280" y="46" fontSize="9" fill="#fff" textAnchor="middle">1</Glyph>
          <Glyph x="736" y="398" fontSize="9" fill="#fff" textAnchor="middle">2</Glyph>
        </Callouts>
      </Desktop>
    </>
  );
}
